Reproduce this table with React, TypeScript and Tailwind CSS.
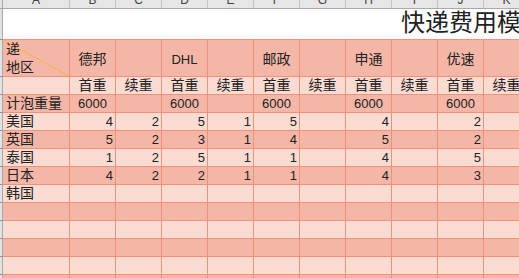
import React from "react";

type C = { t?: string; a?: "l" | "c" | "r"; n?: boolean };

const FONT = "font-['Liberation_Sans','Noto_Sans_CJK_SC',sans-serif]";

function Strip({ h }: { h: string }) {
  return <div className={`w-[3px] shrink-0 bg-[#e2e2e2] border-r border-b border-r-[#a9a9a9] border-b-[#8f8f8f] ${h}`} />;
}

function CellBox({ c, first }: { c: C; first: boolean }) {
  const w = first ? "w-[67px]" : "w-[46px]";
  const align =
    c.a === "r" ? "justify-end pr-[2px]" : c.a === "c" ? "justify-center" : "justify-start pl-[3px]";
  const size = c.n ? "text-[13px]" : "text-[14px]";
  return (
    <div className={`${w} shrink-0 h-full border-r border-[#f29178] flex items-center ${align}`}>
      {c.t ? <span className={`${size} leading-[17px] text-[#222] whitespace-nowrap`}>{c.t}</span> : null}
    </div>
  );
}

function Row({ cells, dark }: { cells: C[]; dark: boolean }) {
  const all: C[] = [...cells];
  while (all.length < 12) all.push({});
  return (
    <div className="flex h-[18px]">
      <Strip h="h-[18px]" />
      <div className={`flex h-[18px] border-b border-[#f29178] ${dark ? "bg-[#f4b6a6]" : "bg-[#fadcd2]"}`}>
        {all.map((c, i) => (
          <CellBox key={i} c={c} first={i === 0} />
        ))}
      </div>
    </div>
  );
}

const r = (t: string): C => ({ t, a: "r", n: true });
const l = (t: string): C => ({ t, a: "l" });
const e: C = {};

export default function App() {
  const letters = ["A", "B", "C", "D", "E", "F", "G", "H", "I", "J", "K", "L"];
  const names = ["德邦", "", "DHL", "", "邮政", "", "申通", "", "优速", "", "", ""];
  const sub: C[] = [e];
  for (let i = 0; i < 5; i++) {
    sub.push({ t: "首重", a: "c" });
    sub.push({ t: "续重", a: "c" });
  }
  const bubble: C[] = [l("计泡重量")];
  for (let i = 0; i < 5; i++) {
    bubble.push({ t: "6000", a: "c", n: true });
    bubble.push(e);
  }
  const data: [string, string[]][] = [
    ["美国", ["4", "2", "5", "1", "5", "", "4", "", "2"]],
    ["英国", ["5", "2", "3", "1", "4", "", "5", "", "2"]],
    ["泰国", ["1", "2", "5", "1", "1", "", "4", "", "5"]],
    ["日本", ["4", "2", "2", "1", "1", "", "4", "", "3"]],
  ];

  return (
    <div className={`w-[519px] h-[278px] overflow-hidden bg-white ${FONT}`}>
      {/* column letters */}
      <div className="flex h-[9px]">
        <div className="w-[3px] shrink-0 h-[9px] bg-[#e2e2e2] border-r border-b border-[#a9a9a9]" />
        <div className="flex h-[9px] bg-[#e6e6e6] border-b border-[#a9a9a9] overflow-hidden">
          {letters.map((L, i) => (
            <div
              key={L}
              className={`${i === 0 ? "w-[67px]" : "w-[46px]"} shrink-0 h-[8px] border-r border-[#c4c4c4] flex items-end justify-center overflow-hidden`}
            >
              <span className="text-[12px] leading-[12px] mb-[2px] text-[#444]">{L}</span>
            </div>
          ))}
        </div>
      </div>

      {/* title row */}
      <div className="flex h-[31px]">
        <Strip h="h-[31px]" />
        <div className="flex-1 h-[31px] border-b border-[#f29178] overflow-hidden pl-[398px]">
          <span className="block text-[24px] leading-[28px] text-[#222] whitespace-nowrap">快递费用模板</span>
        </div>
      </div>

      {/* header names row */}
      <div className="flex h-[37px]">
        <Strip h="h-[37px]" />
        <div className="flex h-[37px] border-b border-[#f29178] bg-[#f4b6a6]">
          <div className="relative w-[67px] shrink-0 h-full border-r border-[#f29178] pl-[3px] text-[14px] leading-[18px] text-[#222]">
            <svg className="absolute left-0 top-0 overflow-visible" width="66" height="36" viewBox="0 0 66 36">
              <line x1="0" y1="0" x2="66" y2="36" stroke="#f6b43c" strokeWidth="1" />
            </svg>
            <div className="relative">递</div>
            <div className="relative">地区</div>
          </div>
          {names.slice(0, 11).map((n, i) => (
            <div
              key={i}
              className="w-[46px] shrink-0 h-full border-r border-[#f29178] flex items-center justify-center pt-[2px]"
            >
              {n ? <span className={`${n === "DHL" ? "text-[13px]" : "text-[14px]"} leading-[17px] text-[#222]`}>{n}</span> : null}
            </div>
          ))}
        </div>
      </div>

      <Row cells={sub} dark={false} />
      <Row cells={bubble} dark={true} />
      {data.map(([name, vals], i) => (
        <Row key={name} cells={[l(name), ...vals.map((v) => (v ? r(v) : e))]} dark={i % 2 === 1} />
      ))}
      <Row cells={[l("韩国")]} dark={false} />
      <Row cells={[]} dark={true} />
      <Row cells={[]} dark={false} />
      <Row cells={[]} dark={true} />
      <Row cells={[]} dark={false} />
      <Row cells={[]} dark={true} />
    </div>
  );
}
